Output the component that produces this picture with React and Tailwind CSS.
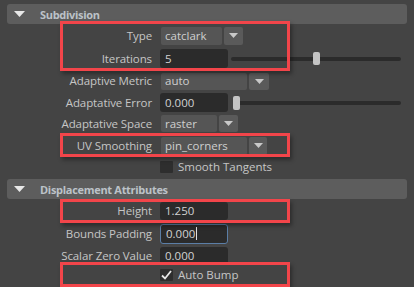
import React from "react";

const font = { fontFamily: '"Open Sans", "Noto Sans", sans-serif' };

function Arrow({ className = "" }) {
  return (
    <svg width="9" height="5" viewBox="0 0 9 5" className={className}>
      <path d="M0 0 H9 L4.5 5 Z" fill="#c8c8c8" />
    </svg>
  );
}

function Header({ title }) {
  return (
    <div className="mx-[7px] h-[20px] rounded-[3px] bg-[#5d5d5d] flex items-center">
      <svg width="11" height="6" viewBox="0 0 11 6" className="ml-[7px]">
        <path d="M0 0 H11 L5.5 6 Z" fill="#e8e8e8" />
      </svg>
      <span className="ml-[15px] text-[11px] font-bold tracking-[-0.3px] text-[#bcc2c8] leading-none">{title}</span>
    </div>
  );
}

function Label({ children }) {
  return (
    <div className="w-[152px] shrink-0 text-right text-[11.5px] tracking-[-0.1px] text-[#c6c6c6] leading-none">{children}</div>
  );
}

function Dropdown({ value, w, aw, h }) {
  return (
    <div className="ml-[9px] flex gap-[2px]">
      <div
        className={`${w} ${h} bg-[#555555] rounded-[2px] flex items-center pl-[4px] text-[11.5px] text-[#cfcfcf] leading-none`}
      >
        {value}
      </div>
      <div className={`${aw} ${h} bg-[#5a5a5a] rounded-[2px] flex items-center justify-center`}>
        <Arrow />
      </div>
    </div>
  );
}

function Field({ value, h = "h-[18px]", focus = false }) {
  return (
    <div
      className={`ml-[8px] w-[68px] ${h} rounded-[3px] bg-[#2b2b2b] flex items-center pl-[5px] text-[11.5px] text-[#d2d2d2] leading-none ${
        focus ? "border border-[#5b7ea6] pl-[4px]" : ""
      }`}
    >
      {value}
      {focus && <span className="ml-[1px] w-px h-[13px] bg-[#e0e0e0]" />}
    </div>
  );
}

function Check({ checked }) {
  return (
    <div className="ml-[8px] w-[13px] h-[12px] bg-[#2e2e2e] rounded-[1px] flex items-center justify-center">
      {checked && (
        <svg width="11" height="10" viewBox="0 0 11 10">
          <path d="M1 5.5 L4 8.5 L10 1" fill="none" stroke="#e6e6e6" strokeWidth="1.8" />
        </svg>
      )}
    </div>
  );
}

function RedBox({ className }) {
  return (
    <div
      className={`absolute left-[60px] w-[230px] border-[3px] border-[#f2454a] shadow-[2px_3px_4px_rgba(0,0,0,0.35)] pointer-events-none ${className}`}
    />
  );
}

export default function App() {
  return (
    <div className="w-[414px] h-[287px] bg-[#444444] overflow-hidden pt-[4px]" style={font}>
      <Header title="Subdivision" />

      <div className="relative">
        <div className="h-[23px] flex items-center">
          <Label>Type</Label>
          <Dropdown value="catclark" w="w-[61px]" aw="w-[19px]" h="h-[18px]" />
        </div>
        <div className="h-[23px] flex items-center">
          <Label>Iterations</Label>
          <Field value="5" h="h-[19px]" />
          <div className="relative ml-[3px] w-[170px] h-[4px] rounded-full bg-[#2b2b2b]">
            <div className="absolute left-[82px] top-[-5px] w-[7px] h-[13px] rounded-[2px] bg-[#c4c4c4]" />
          </div>
        </div>
        <RedBox className="top-[-3px] h-[50px]" />
      </div>

      <div className="h-[22px] flex items-center">
        <Label>Adaptive Metric</Label>
        <Dropdown value="auto" w="w-[86px]" aw="w-[20px]" h="h-[17px]" />
      </div>
      <div className="h-[21px] flex items-center">
        <Label>Adaptative Error</Label>
        <Field value="0.000" h="h-[19px]" />
        <div className="relative ml-[5px] w-[168px] h-[4px] rounded-full bg-[#2b2b2b]">
          <div className="absolute left-0 top-[-5px] w-[7px] h-[14px] rounded-[2px] bg-[#c4c4c4]" />
        </div>
      </div>
      <div className="h-[21px] flex items-center">
        <Label>Adaptative Space</Label>
        <Dropdown value="raster" w="w-[56px]" aw="w-[19px]" h="h-[17px]" />
      </div>

      <div className="relative">
        <div className="h-[23px] flex items-center">
          <Label>UV Smoothing</Label>
          <Dropdown value="pin_corners" w="w-[86px]" aw="w-[18px]" h="h-[18px]" />
        </div>
        <RedBox className="top-[-1px] h-[24px]" />
      </div>

      <div className="h-[20px] flex items-center">
        <div className="w-[152px] shrink-0" />
        <Check />
        <span className="ml-[5px] text-[11.5px] text-[#c6c6c6] leading-none">Smooth Tangents</span>
      </div>

      <div className="h-[2px]" />
      <Header title="Displacement Attributes" />

      <div className="relative">
        <div className="h-[23px] flex items-center">
          <Label>Height</Label>
          <Field value="1.250" />
        </div>
        <RedBox className="top-0 h-[24px]" />
      </div>
      <div className="h-[23px] flex items-center">
        <Label>Bounds Padding</Label>
        <Field value="0.000" h="h-[20px]" focus />
      </div>
      <div className="h-[22px] flex items-center">
        <Label>Scalar Zero Value</Label>
        <Field value="0.000" />
      </div>

      <div className="relative">
        <div className="h-[16px] flex items-center">
          <div className="w-[152px] shrink-0" />
          <Check checked />
          <span className="ml-[5px] text-[11.5px] text-[#c6c6c6] leading-none">Auto Bump</span>
        </div>
        <RedBox className="top-[-5px] h-[25px]" />
      </div>
    </div>
  );
}
